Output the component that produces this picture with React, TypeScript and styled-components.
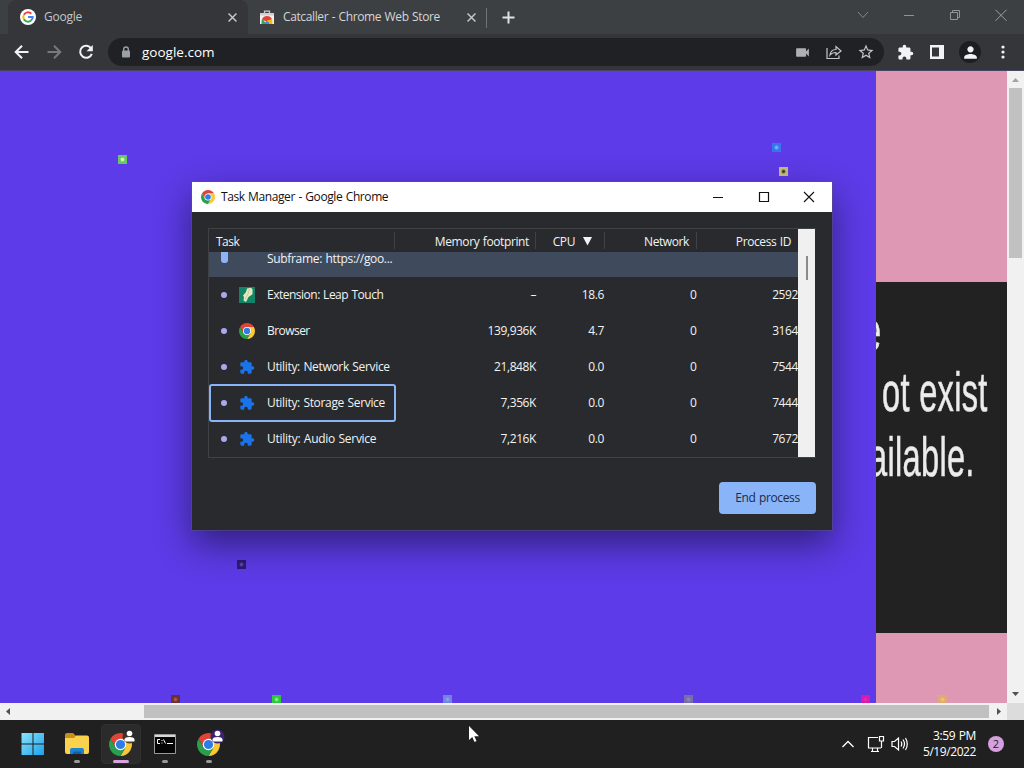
import React from 'react';
import styled, { createGlobalStyle } from 'styled-components';
import { MdVideocam, MdExtension, MdPerson, MdStarBorder } from 'react-icons/md';

const Global = createGlobalStyle`
  * { box-sizing: border-box; }
  body { margin: 0; overflow: hidden; background: #202020; }
  svg { display: block; flex: none; }
`;

const Screen = styled.div`
  position: relative;
  width: 1024px;
  height: 768px;
  display: flex;
  flex-direction: column;
  overflow: hidden;
  font-family: "Open Sans", "Noto Sans", sans-serif;
  font-size: 12px;
  color: #f1f3f4;
`;

const Label = styled.span<{ $ls?: number; $size?: number }>`
  white-space: nowrap;
  font-size: ${p => p.$size ?? 12}px;
  letter-spacing: ${p => p.$ls ?? -0.4}px;
  word-spacing: 0.7px;
`;

const TabStrip = styled.div`
  display: flex;
  height: 34px;
  flex: none;
  background: #3c4043;
  padding-left: 8px;
`;

const Tab = styled.div<{ $active?: boolean; $width: number }>`
  display: flex;
  align-items: center;
  width: ${p => p.$width}px;
  padding: 0 11px 0 12px;
  gap: 8px;
  background: ${p => (p.$active ? '#35363a' : 'transparent')};
  border-radius: 8px 8px 0 0;
  color: ${p => (p.$active ? '#c4c6c9' : '#d4d6d8')};
  & > span { flex: 1; margin-top: -1px; }
`;

const StoreTab = styled(Tab)`
  padding: 0 10px 0 12px;
  gap: 9px;
`;

const TabDivider = styled.div`
  width: 1px;
  height: 20px;
  margin-top: 8px;
  background: #6f7275;
`;

const NewTab = styled.div`
  display: flex;
  align-items: center;
  padding-left: 15px;
  flex: 1;
`;

const WindowControls = styled.div`
  display: flex;
  width: 184px;
  height: 29px;
  align-items: center;
  & > svg { margin: 0 16px; }
`;

const Toolbar = styled.div`
  display: flex;
  align-items: center;
  flex: none;
  height: 37px;
  padding: 0 15px 0 12px;
  background: #35363a;
  border-bottom: 1px solid #4a4560;
`;

const NavButtons = styled.div`
  display: flex;
  gap: 12px;
  width: 96px;
`;

const Omnibox = styled.div`
  display: flex;
  align-items: center;
  width: 776px;
  height: 28px;
  padding: 0 9px 0 13px;
  border-radius: 14px;
  background: #202124;
  color: #fff;
  & > span { flex: 1; margin-left: 11px; }
`;

const OmniboxActions = styled.div`
  display: flex;
  align-items: center;
  gap: 14px;
  color: #c4c7ca;
`;

const ToolbarActions = styled.div`
  display: flex;
  flex: 1;
  align-items: center;
  justify-content: space-between;
  padding-left: 13px;
  color: #f1f3f4;
`;

const Avatar = styled.div`
  display: flex;
  align-items: center;
  justify-content: center;
  width: 22px;
  height: 22px;
  border-radius: 50%;
  background: #1d1e20;
`;

const Viewport = styled.div`
  display: flex;
  flex: none;
  height: 632px;
`;

const Canvas = styled.div`
  position: relative;
  width: 876px;
  background: #5d3be8;
  overflow: hidden;
`;

const Sprite = styled.i<{ $x: number; $y: number; $color: string; $dot: string }>`
  position: absolute;
  left: ${p => p.$x}px;
  top: ${p => p.$y}px;
  width: 9px;
  height: 9px;
  background: radial-gradient(circle, ${p => p.$dot} 0 1px, ${p => p.$color} 2.5px);
`;

const Side = styled.div`
  position: relative;
  width: 131px;
  overflow: hidden;
  background: #df98b4;
`;

const Notice = styled.div`
  height: 351px;
  margin-top: 210.5px;
  padding-top: 17px;
  overflow: hidden;
  background: #222;
  color: #ececec;
`;

const NoticeLine = styled.div<{ $shift: number }>`
  height: 65px;
  line-height: 65px;
  margin-left: ${p => p.$shift}px;
  font-family: "Liberation Sans", sans-serif;
  font-size: 55px;
  white-space: nowrap;
  letter-spacing: 0.5px;
  transform: scaleX(0.593);
  transform-origin: left;
  -webkit-text-stroke: 0.6px #e0e0e0;
  filter: blur(0.6px);
  &:first-child { margin-bottom: -4px; }
`;

const VScroll = styled.div`
  display: flex;
  flex-direction: column;
  align-items: center;
  justify-content: space-between;
  width: 17px;
  padding: 7px 0;
  background: #f1f1f1;
`;

const VThumb = styled.div`
  width: 13px;
  height: 170px;
  margin: 6px 0 auto;
  background: #c1c1c1;
`;

const HScroll = styled.div`
  display: flex;
  flex: none;
  align-items: center;
  height: 17px;
  padding-left: 6px;
  background: #f1f1f1;
`;

const HThumb = styled.div`
  width: 845px;
  height: 13px;
  margin: 0 8px 0 134px;
  background: #c0c0c0;
`;

const Corner = styled.div`
  width: 17px;
  height: 17px;
  margin-left: auto;
  background: #dcdcdc;
`;

const Taskbar = styled.div`
  display: flex;
  align-items: center;
  flex: 1;
  padding: 0 20px 0 11px;
  background: #202020;
`;

const TaskButton = styled.div<{ $active?: boolean }>`
  position: relative;
  display: flex;
  align-items: center;
  justify-content: center;
  width: 40px;
  height: 40px;
  margin: 0 2px;
  border-radius: 4px;
  background: ${p => (p.$active ? '#2b2b2b' : 'transparent')};
  border: 1px solid ${p => (p.$active ? '#303030' : 'transparent')};
`;

const RunMark = styled.i<{ $active?: boolean }>`
  position: absolute;
  bottom: 0;
  width: ${p => (p.$active ? 16 : 6)}px;
  height: 3px;
  border-radius: 2px;
  background: ${p => (p.$active ? '#d6a4de' : '#999')};
`;

const Tray = styled.div`
  display: flex;
  align-items: center;
  margin-left: auto;
  color: #fff;
`;

const TrayIcons = styled.div`
  display: flex;
  align-items: center;
  margin-right: -1px;
  & > svg:nth-child(2) { margin-left: 12px; }
  & > svg:nth-child(3) { margin-left: 6px; }
`;

const Clock = styled.div`
  display: flex;
  flex-direction: column;
  align-items: flex-end;
  width: 68px;
  line-height: 16px;
`;

const Count = styled.div`
  width: 16px;
  height: 16px;
  margin-left: 12px;
  border-radius: 50%;
  background: #d4a0dd;
  color: #222;
  font-size: 11px;
  line-height: 16px;
  text-align: center;
`;

const Dialog = styled.div`
  position: absolute;
  left: 192px;
  top: 182px;
  width: 640px;
  height: 348px;
  background: #292a2d;
  box-shadow: 0 0 0 1px rgba(90, 80, 130, 0.55), 0 14px 34px rgba(0, 0, 0, 0.48);
`;

const TitleBar = styled.div`
  display: flex;
  align-items: center;
  height: 30px;
  padding: 0 17px 0 9px;
  background: #fff;
  color: #111;
  & > span { flex: 1; margin: -1px 0 0 6px; }
  & > svg { margin-top: -1px; }
`;

const DialogControls = styled.div`
  display: flex;
  gap: 33.5px;
  margin-top: -1px;
`;

const TableFrame = styled.div`
  display: flex;
  width: 608px;
  height: 230px;
  margin: 16px 0 0 16px;
  border: 1px solid #3f4145;
  border-right: 0;
`;

const Table = styled.div`
  width: 589px;
  overflow: hidden;
`;

const HeaderRow = styled.div`
  display: grid;
  grid-template-columns: 186px 141px 69px 92px 101px;
  align-items: center;
  height: 23px;
`;

const HeaderCell = styled.div<{ $left?: boolean; $last?: boolean; $pad?: number }>`
  display: flex;
  align-items: center;
  justify-content: ${p => (p.$left ? 'flex-start' : 'flex-end')};
  height: 17px;
  gap: 7px;
  padding: 2px ${p => p.$pad ?? 7}px 0 7px;
  border-right: ${p => (p.$last ? 0 : 1)}px solid #3f4145;
`;

const Row = styled.div<{ $selected?: boolean }>`
  display: grid;
  grid-template-columns: 186px 141px 68px 92.5px 101.5px;
  align-items: center;
  height: 36px;
  background: ${p => (p.$selected ? '#3f4a5d' : 'transparent')};
`;

const RowsClip = styled.div`
  display: flex;
  flex-direction: column;
  justify-content: flex-end;
  height: 205px;
  overflow: hidden;
  & > div { flex: none; }
`;

const TaskCell = styled.div<{ $focused?: boolean }>`
  display: flex;
  align-items: center;
  height: 38px;
  width: 187px;
  margin: -1px 0;
  padding-left: 10px;
  border: 2px solid ${p => (p.$focused ? '#8ab4f8' : 'transparent')};
  border-radius: 3px;
  & > span { margin-top: -1px; }
`;

const BulletSlot = styled.div`
  display: flex;
  justify-content: center;
  width: 6px;
`;

const Bullet = styled.i<{ $tall?: boolean }>`
  flex: none;
  width: ${p => (p.$tall ? 7 : 6)}px;
  height: ${p => (p.$tall ? 14 : 6)}px;
  margin-top: ${p => (p.$tall ? -7 : 0)}px;
  border-radius: 3px;
  background: ${p => (p.$tall ? '#8fb4f5' : '#a9a8ee')};
`;

const IconSlot = styled.div`
  width: 16px;
  height: 16px;
  margin: 0 12px 0 12px;
`;

const NumCell = styled.div`
  text-align: right;
  white-space: nowrap;
  margin-top: -2px;
`;

const TableScroll = styled.div`
  width: 17px;
  padding: 27px 0 0 8px;
  background: #f0f0f0;
`;

const TableThumb = styled.div`
  width: 2px;
  height: 24px;
  background: #8a8a8a;
`;

const EndButton = styled.button`
  display: flex;
  align-items: center;
  justify-content: center;
  width: 97px;
  height: 32px;
  margin: 24px 16px 0 auto;
  padding: 0 0 1px;
  border: 0;
  border-radius: 4px;
  background: #8ab4f8;
  color: #202b42;
  font-family: inherit;
`;

const Pointer = styled.div`
  position: absolute;
  left: 468px;
  top: 725px;
`;

const ChromeLogo = ({ size }: { size: number }) => (
  <svg width={size} height={size} viewBox="1 1 46 46">
    <path d="M4.100 12.500A23 23 0 0 1 43.900 12.500H24V24L14 29.800Z" fill="#e04436" />
    <path d="M43.900 12.500A23 23 0 0 1 24 47L34 29.800 24 24V12.500Z" fill="#fcc934" />
    <path d="M4.100 12.500 14 29.800 24 24 34 29.800 24 47A23 23 0 0 1 4.100 12.500Z" fill="#2b9f4c" />
    <circle cx="24" cy="24" r="11.500" fill="#fff" />
    <circle cx="24" cy="24" r="9.200" fill="#2e7ce8" />
  </svg>
);

const GoogleLogo = () => (
  <svg width="16" height="16" viewBox="0 0 16 16" fill="none" strokeWidth="2">
    <circle cx="8" cy="8" r="8" fill="#fff" />
    <path d="M11.3 4.7A4.7 4.7 0 0 0 3.9 5.7" stroke="#ea4335" />
    <path d="M3.9 5.7A4.7 4.7 0 0 0 3.9 10.3" stroke="#fbbc05" />
    <path d="M3.9 10.3A4.7 4.7 0 0 0 11 11.6" stroke="#34a853" />
    <path d="M11 11.6A4.7 4.7 0 0 0 12.7 8H8" stroke="#4285f4" />
  </svg>
);

const StoreLogo = () => (
  <svg width="14" height="15" viewBox="0 0 14 15">
    <path d="M4.500 3.500V1.200h5v2.300" fill="none" stroke="#c8c8c8" strokeWidth="1.300" />
    <path d="M0 3h14v11H0Z" fill="#f1f1f1" />
    <path d="M0 3h14v2.500H0Z" fill="#cfcfcf" />
    <path d="M1.500 14V11.500a5.500 5.500 0 0 1 1-3L6 14Z" fill="#34a853" />
    <path d="M2 9.200a5.600 5.600 0 0 1 10 0L7 12Z" fill="#e04436" />
    <path d="M12 9.200q.8 1.800.5 4.800H8l-1-3.500Z" fill="#fbbc05" />
    <path d="M4.500 14a2.500 2.500 0 0 1 5 0Z" fill="#4285f4" />
  </svg>
);

const NavArrow = ({ color, flip }: { color: string; flip?: boolean }) => (
  <svg width="20" height="20" viewBox="0 0 20 20" fill="none" stroke={color} strokeWidth="2">
    <path d={flip ? 'M3.500 10h12.500M10 3.700 16.300 10 10 16.300' : 'M16.500 10H4M10 3.700 3.700 10 10 16.300'} />
  </svg>
);

const Reload = () => (
  <svg width="20" height="20" viewBox="0 0 20 20">
    <path d="M15.200 6.500A6 6 0 1 0 15.800 11.800" fill="none" stroke="#f1f3f4" strokeWidth="2" />
    <path d="M16.800 3v6.300h-6.300Z" fill="#f1f3f4" />
  </svg>
);

const Close = ({ size = 9, color = '#c6c8ca', w = 1.6 }) => (
  <svg width={size} height={size} viewBox="0 0 10 10">
    <path d="M.6.6 9.4 9.4M9.4.6.6 9.4" stroke={color} strokeWidth={w} />
  </svg>
);

const LeapLogo = () => (
  <svg width="16" height="16" viewBox="0 0 16 16">
    <path d="M0 0h16v16H0Z" fill="#128468" />
    <path d="M8 1.500 12 .7l1.500 1.500v5L9.500 10 7 15l-2.500-1.500L5 10 4 8.500 7 5Z" fill="#e4eabf" />
    <path d="M10.500 2 9 7 6 12.500" stroke="#c3d094" fill="none" />
  </svg>
);

const Puzzle = () => <MdExtension size={16} color="#1a73e8" />;

const TaskChrome = ({ bg }: { bg?: string }) => (
  <svg width="30" height="28" viewBox="0 0 30 28" overflow="visible">
    <svg x="3" y="3" width="23" height="23"><ChromeLogo size={23} /></svg>
    <circle cx="23.500" cy="6.500" r="7" fill={bg ?? '#2b2b2b'} opacity={bg ? 1 : 0.85} />
    <circle cx="23.500" cy="3.500" r="2.800" fill="#fff" />
    <path d="M18.500 11.500V9.500C18.500 7.800 21 7 23.500 7s5 .8 5 2.500v2Z" fill="#fff" />
  </svg>
);

type Task = { name: string; icon: React.ReactNode; memory: string; cpu: string; net: string; pid: string; selected?: boolean; focused?: boolean; ls?: number };

const tasks: Task[] = [
  { name: 'Subframe: https://goo...', icon: null, memory: '', cpu: '', net: '', pid: '', selected: true, ls: -0.32 },
  { name: 'Extension: Leap Touch', icon: <LeapLogo />, memory: '–', cpu: '18.6', net: '0', pid: '2592', ls: -0.5 },
  { name: 'Browser', icon: <ChromeLogo size={16} />, memory: '139,936K', cpu: '4.7', net: '0', pid: '3164', ls: -0.55 },
  { name: 'Utility: Network Service', icon: <Puzzle />, memory: '21,848K', cpu: '0.0', net: '0', pid: '7544', ls: -0.33 },
  { name: 'Utility: Storage Service', icon: <Puzzle />, memory: '7,356K', cpu: '0.0', net: '0', pid: '7444', focused: true, ls: -0.33 },
  { name: 'Utility: Audio Service', icon: <Puzzle />, memory: '7,216K', cpu: '0.0', net: '0', pid: '7672', ls: -0.28 },
];

const sprites = [
  { x: 118, y: 84, c: '#69c56c', d: '#e6ff9c' },
  { x: 772, y: 72, c: '#3a74ec', d: '#68b8ff' },
  { x: 779, y: 96, c: '#c5bf83', d: '#47432f' },
  { x: 237, y: 489, c: '#2c1b77', d: '#6248a0' },
  { x: 171, y: 624, c: '#66303a', d: '#a85c38' },
  { x: 272, y: 624, c: '#2fc63e', d: '#7bf279' },
  { x: 443, y: 624, c: '#7085e2', d: '#8d9de8' },
  { x: 684, y: 624, c: '#776ea8', d: '#8e85b5' },
  { x: 861, y: 624, c: '#d51bb0', d: '#ef28a0' },
];

export default function App() {
  return (
    <Screen>
      <Global />
      <TabStrip>
        <Tab $active $width={240}>
          <GoogleLogo />
          <Label $ls={-0.25}>Google</Label>
          <Close />
        </Tab>
        <StoreTab $width={238}>
          <StoreLogo />
          <Label $ls={-0.38}>Catcaller - Chrome Web Store</Label>
          <Close />
        </StoreTab>
        <TabDivider />
        <NewTab>
          <svg width="13" height="13" viewBox="0 0 13 13"><path d="M6.500 .5v12M.5 6.500h12" stroke="#e0e2e4" strokeWidth="2" /></svg>
        </NewTab>
        <WindowControls>
          <svg width="14" height="12" viewBox="0 0 14 12"><path d="m2 3 5 5.500L12 3" fill="none" stroke="#85888a" /></svg>
          <svg width="14" height="12" viewBox="0 0 14 12"><path d="M2 6.500h10" stroke="#909294" /></svg>
          <svg width="14" height="12" viewBox="0 0 14 12"><path d="M2.500 3.500h7v7h-7ZM4.500 3.500v-2h7v7h-2" fill="none" stroke="#929496" /></svg>
          <svg width="14" height="12" viewBox="0 0 14 12"><path d="m1.500 .8 11 11M12.500 .8l-11 11" stroke="#9a9c9e" /></svg>
        </WindowControls>
      </TabStrip>
      <Toolbar>
        <NavButtons>
          <NavArrow color="#f1f3f4" />
          <NavArrow color="#77797c" flip />
          <Reload />
        </NavButtons>
        <Omnibox>
          <svg width="10" height="12" viewBox="0 0 10 12"><path d="M2.700 5V3.300a2.300 2.300 0 0 1 4.600 0V5" fill="none" stroke="#9aa0a6" strokeWidth="1.400" /><rect x="1" y="4.500" width="8" height="7" rx="1" fill="#9aa0a6" /></svg>
          <Label $size={13.5} $ls={0}>google.com</Label>
          <OmniboxActions>
            <MdVideocam size={17} color="#aeb0b3" />
            <svg width="18" height="16" viewBox="0 0 18 16" fill="none" stroke="currentColor" strokeWidth="1.2">
              <path d="M2 4v10.500h12V11.500" />
              <path d="M5 11c.5-4 2.500-5.500 6-5.500V2.500L16 7l-5 4V8.500C8.500 8.500 6.500 9 5 11Z" />
            </svg>
            <MdStarBorder size={18} />
          </OmniboxActions>
        </Omnibox>
        <ToolbarActions>
          <MdExtension size={17} />
          <svg width="14" height="14" viewBox="0 0 14 14"><path fillRule="evenodd" d="M0 0h14v14H0ZM2 2.500v9h7v-9Z" fill="#f1f3f4" /></svg>
          <Avatar><MdPerson size={19} /></Avatar>
          <svg width="12" height="14" viewBox="0 0 12 14" fill="#f1f3f4"><circle cx="6" cy="2" r="1.600" /><circle cx="6" cy="7" r="1.600" /><circle cx="6" cy="12" r="1.600" /></svg>
        </ToolbarActions>
      </Toolbar>
      <Viewport>
        <Canvas>
          {sprites.map(s => <Sprite key={`${s.x}-${s.y}`} $x={s.x} $y={s.y} $color={s.c} $dot={s.d} />)}
        </Canvas>
        <Side>
          <Notice>
            <NoticeLine $shift={-13}>e</NoticeLine>
            <NoticeLine $shift={6}>ot exist</NoticeLine>
            <NoticeLine $shift={-7}>ailable.</NoticeLine>
          </Notice>
          <Sprite $x={62} $y={624} $color="#e0a97c" $dot="#efc75c" />
        </Side>
        <VScroll>
          <svg width="7" height="4"><path d="M0 4 3.500 0 7 4Z" fill="#a3a3a3" /></svg>
          <VThumb />
          <svg width="7" height="4"><path d="M0 0 3.500 4 7 0Z" fill="#505050" /></svg>
        </VScroll>
      </Viewport>
      <HScroll>
        <svg width="4" height="7"><path d="M4 0 0 3.500 4 7Z" fill="#505050" /></svg>
        <HThumb />
        <svg width="4" height="7"><path d="M0 0 4 3.500 0 7Z" fill="#505050" /></svg>
        <Corner />
      </HScroll>
      <Taskbar>
        <TaskButton>
          <svg width="24" height="24" viewBox="0 0 24 24">
            <defs><linearGradient id="win" x1="0" y1="0" x2="1" y2="1"><stop offset="0" stopColor="#8be3fb" /><stop offset="1" stopColor="#1ba0ec" /></linearGradient></defs>
            <path d="M.5 1h11v10.500H.5ZM12.500 1H23v10.500H12.500ZM.5 12.500h11V23H.5ZM12.500 12.500H23V23H12.500Z" fill="url(#win)" />
          </svg>
        </TaskButton>
        <TaskButton>
          <svg width="26" height="24" viewBox="0 0 26 24">
            <path d="M1 3q0-2 2-2h6l3 3v5H1Z" fill="#c98f1c" />
            <path d="M1 6h9l2-2.500h11q2 0 2 2V20q0 2-2 2H3q-2 0-2-2Z" fill="#fbd24d" />
            <path d="M6 22v-4q0-2 2-2h10q2 0 2 2v4Z" fill="#1d82cf" />
            <path d="M9 19.500h8V22H9Z" fill="#135fa5" />
          </svg>
          <RunMark />
        </TaskButton>
        <TaskButton $active><TaskChrome /><RunMark $active /></TaskButton>
        <TaskButton>
          <svg width="22" height="20" viewBox="0 0 22 20">
            <path d="M.5 .5h21v19H.5Z" fill="#050505" stroke="#999" />
            <path d="M1 1h20v2H1Z" fill="#d8d8d8" />
            <path d="M6 5.500H3.500v4H6M8 6v1M8 8.500v1M9.500 5.500l2 4M13 9.500h6" stroke="#fff" fill="none" />
          </svg>
          <RunMark />
        </TaskButton>
        <TaskButton><TaskChrome bg="#3b2370" /><RunMark /></TaskButton>
        <Tray>
          <TrayIcons>
            <svg width="14" height="10" viewBox="0 0 14 10"><path d="m1.500 8 5.500-5.500L12.500 8" fill="none" stroke="#fff" strokeWidth="1.300" /></svg>
            <svg width="18" height="18" viewBox="0 0 18 18" fill="none" stroke="#fff" strokeWidth="1.200">
              <path d="M11 2.500H1.500v10.500H14M5.500 13v3M10.500 13v3M4 16.500h8M12.500 1.500h4V6h-4ZM14.500 6v7" />
            </svg>
            <svg width="18" height="16" viewBox="0 0 18 16" fill="none" stroke="#fff" strokeWidth="1.200">
              <path d="M1 5.500h2.500L7.500 2v12L3.500 10.500H1ZM10 5.500q1.500 2.500 0 5M12 3.500q3 4.500 0 9M14.500 2q3.500 6 0 12" />
            </svg>
          </TrayIcons>
          <Clock>
            <Label $ls={-0.35}>3:59 PM</Label>
            <Label $ls={-0.42}>5/19/2022</Label>
          </Clock>
          <Count>2</Count>
        </Tray>
      </Taskbar>
      <Dialog>
        <TitleBar>
          <ChromeLogo size={14} />
          <Label>Task Manager - Google Chrome</Label>
          <DialogControls>
            <svg width="12" height="12" viewBox="0 0 12 12"><path d="M1 6.500h10" stroke="#111" /></svg>
            <svg width="12" height="12" viewBox="0 0 12 12"><path d="M1.500 1.500h9v9h-9Z" fill="none" stroke="#111" strokeWidth="1.200" /></svg>
            <svg width="12" height="12" viewBox="0 0 12 12"><path d="m1 1 10 10M11 1 1 11" stroke="#111" strokeWidth="1.100" /></svg>
          </DialogControls>
        </TitleBar>
        <TableFrame>
          <Table>
            <HeaderRow>
              <HeaderCell $left><Label $ls={-0.5}>Task</Label></HeaderCell>
              <HeaderCell $pad={6}><Label $ls={-0.38}>Memory footprint</Label></HeaderCell>
              <HeaderCell $pad={8}>
                <Label>CPU</Label>
                <svg width="14" height="9" viewBox="0 0 14 9"><path d="M1 0h9L5.500 8.500Z" fill="#f1f3f4" /></svg>
              </HeaderCell>
              <HeaderCell><Label>Network</Label></HeaderCell>
              <HeaderCell $last><Label>Process ID</Label></HeaderCell>
            </HeaderRow>
            <RowsClip>
              {tasks.map(t => (
                <Row key={t.name} $selected={t.selected}>
                  <TaskCell $focused={t.focused}>
                    <BulletSlot><Bullet $tall={t.selected} /></BulletSlot>
                    <IconSlot>{t.icon}</IconSlot>
                    <Label $ls={t.ls}>{t.name}</Label>
                  </TaskCell>
                  <NumCell><Label>{t.memory}</Label></NumCell>
                  <NumCell><Label>{t.cpu}</Label></NumCell>
                  <NumCell><Label>{t.net}</Label></NumCell>
                  <NumCell><Label>{t.pid}</Label></NumCell>
                </Row>
              ))}
            </RowsClip>
          </Table>
          <TableScroll><TableThumb /></TableScroll>
        </TableFrame>
        <EndButton><Label $ls={-0.35}>End process</Label></EndButton>
      </Dialog>
      <Pointer>
        <svg width="12" height="18" viewBox="0 0 12 18"><path d="M1 1v14l3.300-3 2.200 5 2-1-2.200-4.700H11Z" fill="#fff" /></svg>
      </Pointer>
    </Screen>
  );
}
